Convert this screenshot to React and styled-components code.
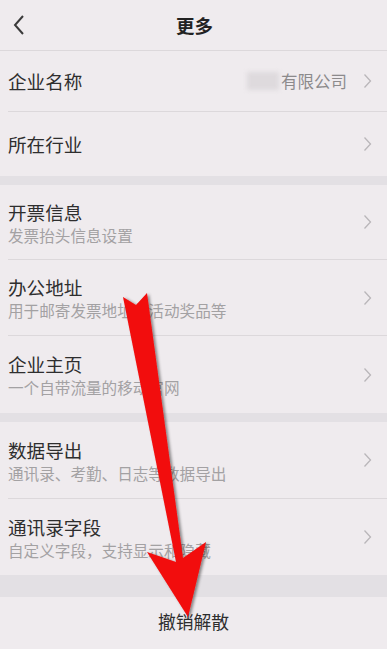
import React from "react";
import styled, { createGlobalStyle } from "styled-components";

const GlobalStyle = createGlobalStyle`
  html, body {
    margin: 0;
    padding: 0;
    background: #efebee;
  }
  body {
    font-family: "Noto Sans CJK SC", "Noto Sans", sans-serif;
  }
`;

const Page = styled.div`
  position: relative;
  width: 387px;
  height: 649px;
  overflow: hidden;
  background: #efebee;
  display: flex;
  flex-direction: column;
`;

const Header = styled.div`
  height: 51px;
  flex-shrink: 0;
  display: flex;
  align-items: center;
  justify-content: center;
  position: relative;
  border-bottom: 1px solid #dcd8db;
  box-sizing: border-box;
`;

const BackButton = styled.div`
  position: absolute;
  left: 12px;
  top: 13px;
  width: 20px;
  height: 24px;
  display: flex;
  align-items: center;
`;

const Title = styled.h1`
  margin: 0 0 0 2px;
  font-size: 18.5px;
  font-weight: 700;
  color: #222;
`;

const Group = styled.div`
  display: flex;
  flex-direction: column;
`;

const Gap = styled.div`
  height: ${(p) => p.h}px;
  background: #e3e0e4;
  flex-shrink: 0;
`;

const Row = styled.div`
  height: ${(p) => p.h}px;
  box-sizing: border-box;
  margin-left: 8px;
  padding-right: 15px;
  display: flex;
  align-items: center;
  border-bottom: ${(p) => (p.last ? "none" : "1px solid #dcd8db")};
`;

const Texts = styled.div`
  flex: 1;
  display: flex;
  flex-direction: column;
  gap: 1px;
`;

const Label = styled.div`
  font-size: 18.6px;
  line-height: 24px;
  color: #2e2e2e;
`;

const Sub = styled.div`
  font-size: 15.6px;
  line-height: 20px;
  color: #a3a1a3;
`;

const Value = styled.div`
  display: flex;
  align-items: center;
  font-size: 16.5px;
  color: #8c8a8c;
  margin-right: 16px;
`;

const Blur = styled.span`
  display: inline-block;
  width: 32px;
  height: 18px;
  background: #dedadd;
  filter: blur(2px);
  margin-right: 2px;
`;

const Footer = styled.div`
  flex: 1;
  display: flex;
  align-items: center;
  justify-content: center;
  font-size: 17.8px;
  color: #2e2e2e;
  padding-bottom: 4px;
`;

const ArrowLayer = styled.svg`
  position: absolute;
  left: 0;
  top: 0;
  pointer-events: none;
`;

const Chevron = () => (
  <svg width="9" height="16" viewBox="0 0 9 16">
    <path d="M1.5 1.5 L7.5 8 L1.5 14.5" fill="none" stroke="#b9b6b9" strokeWidth="1.3" />
  </svg>
);

const rows = [
  [
    { label: "企业名称", value: "有限公司", h: 61 },
    { label: "所在行业", h: 64, last: true },
  ],
  [
    { label: "开票信息", sub: "发票抬头信息设置", h: 75 },
    { label: "办公地址", sub: "用于邮寄发票地址、活动奖品等", h: 76 },
    { label: "企业主页", sub: "一个自带流量的移动官网", h: 77, last: true },
  ],
  [
    { label: "数据导出", sub: "通讯录、考勤、日志等数据导出", h: 77 },
    { label: "通讯录字段", sub: "自定义字段，支持显示和隐藏", h: 76, last: true },
  ],
];

const gaps = [9, 9, 22];

const App = () => {
  return (
    <>
      <GlobalStyle />
      <Page>
        <Header>
          <BackButton>
            <svg width="14" height="22" viewBox="0 0 14 22">
              <path d="M11 2 L3 11 L11 20" fill="none" stroke="#3a3a3a" strokeWidth="2" />
            </svg>
          </BackButton>
          <Title>更多</Title>
        </Header>
        {rows.map((group, gi) => (
          <React.Fragment key={gi}>
            <Group>
              {group.map((r) => (
                <Row key={r.label} h={r.h} last={r.last}>
                  <Texts>
                    <Label>{r.label}</Label>
                    {r.sub && <Sub>{r.sub}</Sub>}
                  </Texts>
                  {r.value && (
                    <Value>
                      <Blur />
                      {r.value}
                    </Value>
                  )}
                  <Chevron />
                </Row>
              ))}
            </Group>
            <Gap h={gaps[gi]} />
          </React.Fragment>
        ))}
        <Footer>撤销解散</Footer>
        <ArrowLayer width="387" height="649" viewBox="0 0 387 649">
          <defs>
            <filter id="sh" x="-20%" y="-10%" width="140%" height="120%">
              <feDropShadow dx="2" dy="1" stdDeviation="1.5" floodColor="#000" floodOpacity="0.45" />
            </filter>
          </defs>
          <polygon
            points="123,297 136,305 147,293 183,558 206,542 188,617 147,552 176,562"
            fill="#f20a0a"
            filter="url(#sh)"
          />
        </ArrowLayer>
      </Page>
    </>
  );
};

export default App;
